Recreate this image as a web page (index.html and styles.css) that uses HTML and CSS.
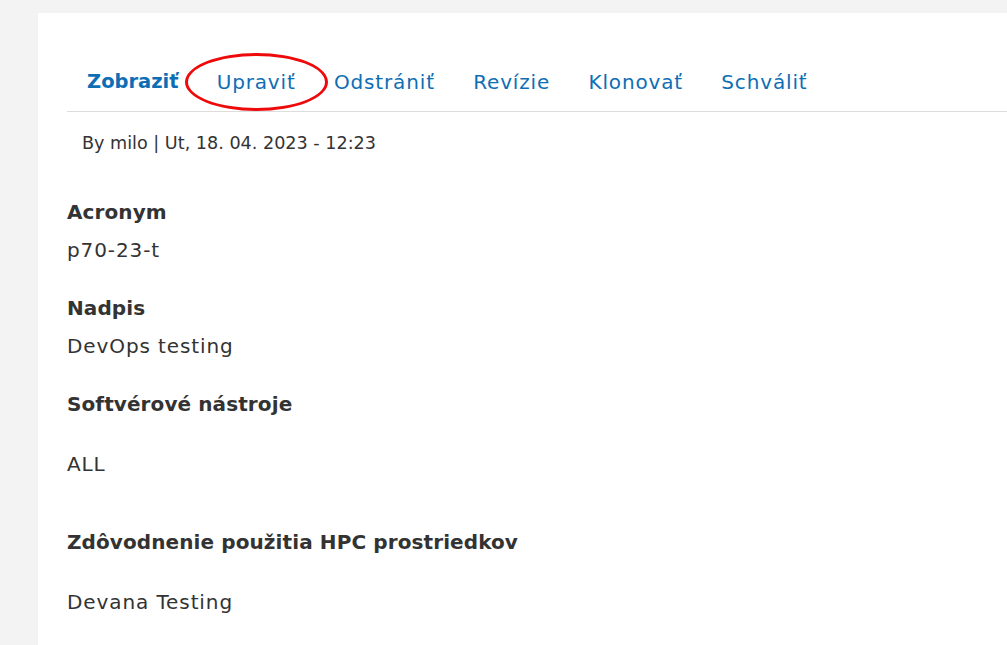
FILE: index.html
```html
<!DOCTYPE html>
<html lang="sk">
<head>
    <meta charset="UTF-8">
    <meta name="viewport" content="width=device-width, initial-scale=1.0">
    <title>p70-23-t</title>
    <link rel="stylesheet" href="styles.css">
</head>
<body>
    <div id="page">
        <ul class="tabs">
            <li><a href="#" class="tab active">Zobraziť</a></li>
            <li class="marked"><a href="#" class="tab">Upraviť</a></li>
            <li><a href="#" class="tab">Odstrániť</a></li>
            <li><a href="#" class="tab">Revízie</a></li>
            <li><a href="#" class="tab">Klonovať</a></li>
            <li><a href="#" class="tab">Schváliť</a></li>
        </ul>

        <div class="meta">By milo | Ut, 18. 04. 2023 - 12:23</div>

        <div class="field">
            <div class="field-label">Acronym</div>
            <div class="field-item">p70-23-t</div>
        </div>
        <div class="field">
            <div class="field-label">Nadpis</div>
            <div class="field-item">DevOps testing</div>
        </div>
        <div class="field">
            <div class="field-label">Softvérové nástroje</div>
            <div class="field-item"><p>ALL</p></div>
        </div>
        <div class="field">
            <div class="field-label">Zdôvodnenie použitia HPC prostriedkov</div>
            <div class="field-item"><p>Devana Testing</p></div>
        </div>
    </div>
</body>
</html>
```

FILE: styles.css
```css
/* Node view page */
body {
    margin: 0;
    background-color: #f3f3f3;
    font-family: "DejaVu Sans", sans-serif;
    color: #333;
}
#page {
    box-sizing: border-box;
    margin: 13px 0 0 38px;
    background: white;
    height: 632px;
    padding: 46px 0 0 29px;
    overflow: hidden;
}
.tabs {
    list-style: none;
    margin: 0;
    padding: 0;
    display: flex;
    border-bottom: 1px solid #ddd;
    height: 52px;
}
.tabs li {
    position: relative;
}
.tab {
    display: block;
    padding: 10px 18.3px 10px 20px;
    font-size: 20px;
    letter-spacing: 0.85px;
    line-height: 26px;
    color: #0e6eb4;
    text-decoration: none;
}
.tab.active {
    font-weight: bold;
    font-size: 19.5px;
    letter-spacing: 0;
    padding-right: 18px;
}
/* red marker drawn around the edit tab */
.marked::after {
    content: "";
    position: absolute;
    left: -12px;
    top: -6px;
    width: 137px;
    height: 52px;
    border: 3px solid #ee0a0a;
    border-radius: 50%;
}
.meta {
    padding: 18px 0 0 15px;
    font-size: 17.6px;
    line-height: 26px;
    margin-bottom: 41px;
}
.field {
    margin-bottom: 28px;
}
.field-label {
    font-weight: bold;
    font-size: 20px;
    letter-spacing: 0.1px;
    line-height: 30px;
    margin-bottom: 8px;
}
.field-item {
    font-size: 20px;
    letter-spacing: 0.9px;
    line-height: 30px;
}
.field-item p {
    margin: 30px 0 48px;
}
```
